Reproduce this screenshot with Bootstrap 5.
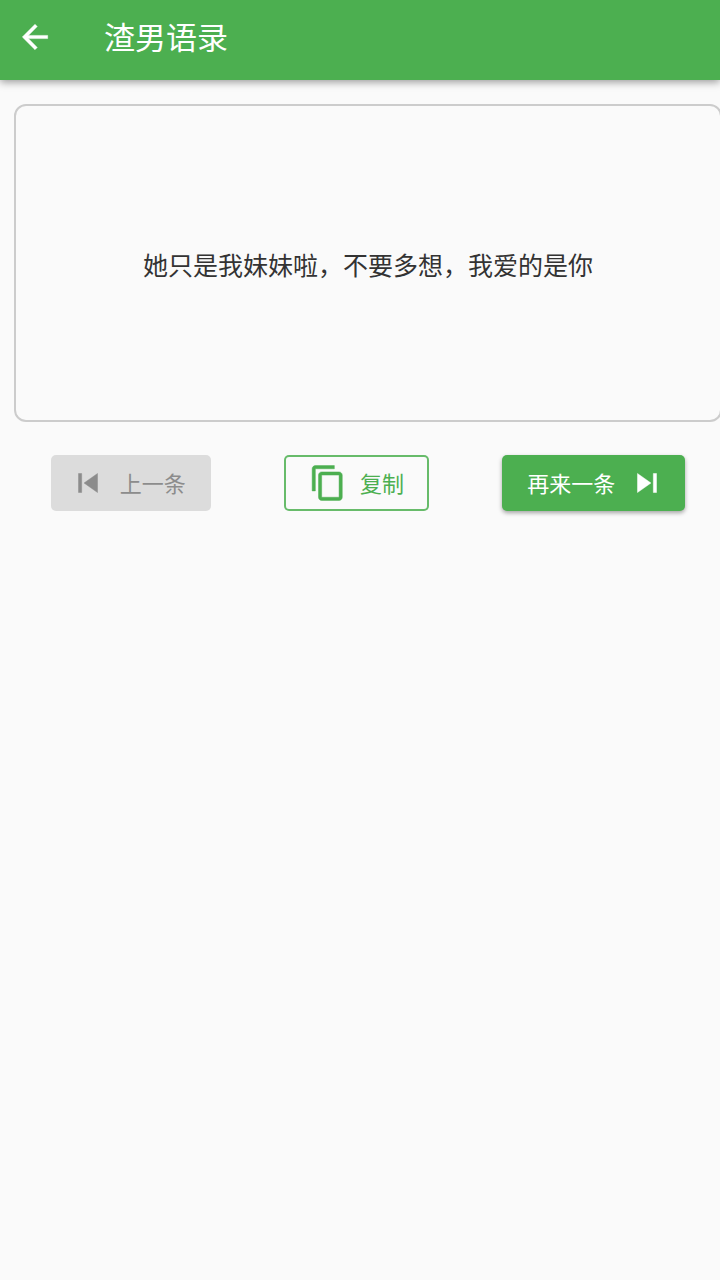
<!DOCTYPE html>
<html lang="zh-CN">
<head>
<meta charset="utf-8">
<meta name="viewport" content="width=device-width, initial-scale=1">
<title>渣男语录</title>
<link href="https://cdn.jsdelivr.net/npm/bootstrap@5.3.0/dist/css/bootstrap.min.css" rel="stylesheet">
<style>
  body { background: #fafafa; color: #333; font-family: "Noto Sans CJK SC", sans-serif; overflow-x: hidden; }
  .icon { width: 38px; height: 38px; fill: currentColor; stroke: currentColor; stroke-width: .3; flex: none; }
  .app-bar { height: 80px; padding: 0 16px 6px; gap: 50px; background: #4caf50; box-shadow: 0 2px 8px rgba(0, 0, 0, .4); }
  .app-title { font-size: 31px; line-height: 40px; font-weight: 400; padding-bottom: 2px; }
  /* the content runs slightly past the right edge of the screen */
  .content { padding: 24px 0 14px 14px; margin-right: -2px; }
  .quote-box { height: 318px; border: 2px solid #ccc; border-radius: 12px; background: transparent; }
  .quote-text { font-size: 25px; line-height: 36px; padding-top: 2px; }
  .actions { margin-top: 33px; }
  .action { --bs-btn-padding-x: 0; --bs-btn-padding-y: 0; --bs-btn-border-radius: 5px; --bs-btn-font-size: 22px;
    height: 56px; gap: 13px; border: 0; line-height: 32px; }
  .action span { padding-bottom: 2px; }
  .action-prev { padding: 0 25px 0 18px; --bs-btn-disabled-bg: #dcdcdc; --bs-btn-disabled-color: #8c8c8c; --bs-btn-disabled-opacity: 1; }
  .action-copy { padding: 0 25px; color: #4caf50; box-shadow: inset 0 0 0 2px #67bb6a; }
  .action-next { padding: 0 19px 0 25px; --bs-btn-color: #fff; --bs-btn-bg: #4caf50; box-shadow: 0 2px 4px rgba(0, 0, 0, .35); }
</style>
</head>
<body class="min-vh-100">
<header class="app-bar d-flex align-items-center text-white">
  <button type="button" class="btn p-0 border-0 text-white d-flex" aria-label="返回">
    <svg class="icon" viewBox="0 0 24 24" aria-hidden="true"><path d="M20 11H7.83l5.59-5.59L12 4l-8 8 8 8 1.41-1.41L7.83 13H20v-2z"/></svg>
  </button>
  <h1 class="app-title m-0">渣男语录</h1>
</header>
<main class="content">
  <section class="quote-box card d-flex align-items-center justify-content-center">
    <p class="quote-text m-0 text-center">她只是我妹妹啦，不要多想，我爱的是你</p>
  </section>
  <div class="actions d-flex justify-content-around">
    <button type="button" class="btn action action-prev d-flex align-items-center" disabled>
      <svg class="icon" viewBox="0 0 24 24" aria-hidden="true"><path d="M6 6h2v12H6zm3.500 6l8.500 6V6z"/></svg>
      <span>上一条</span>
    </button>
    <button type="button" class="btn action action-copy d-flex align-items-center">
      <svg class="icon" viewBox="0 0 24 24" aria-hidden="true"><path d="M16 1H4c-1.100 0-2 .9-2 2v14h2V3h12V1zm3 4H8c-1.100 0-2 .9-2 2v14c0 1.100.9 2 2 2h11c1.100 0 2-.9 2-2V7c0-1.100-.9-2-2-2zm0 16H8V7h11v14z"/></svg>
      <span>复制</span>
    </button>
    <button type="button" class="btn action action-next d-flex align-items-center">
      <span>再来一条</span>
      <svg class="icon" viewBox="0 0 24 24" aria-hidden="true"><path d="M6 18l8.500-6L6 6v12zM16 6v12h2V6h-2z"/></svg>
    </button>
  </div>
</main>
<script src="https://cdn.jsdelivr.net/npm/bootstrap@5.3.0/dist/js/bootstrap.bundle.min.js"></script>
</body>
</html>
